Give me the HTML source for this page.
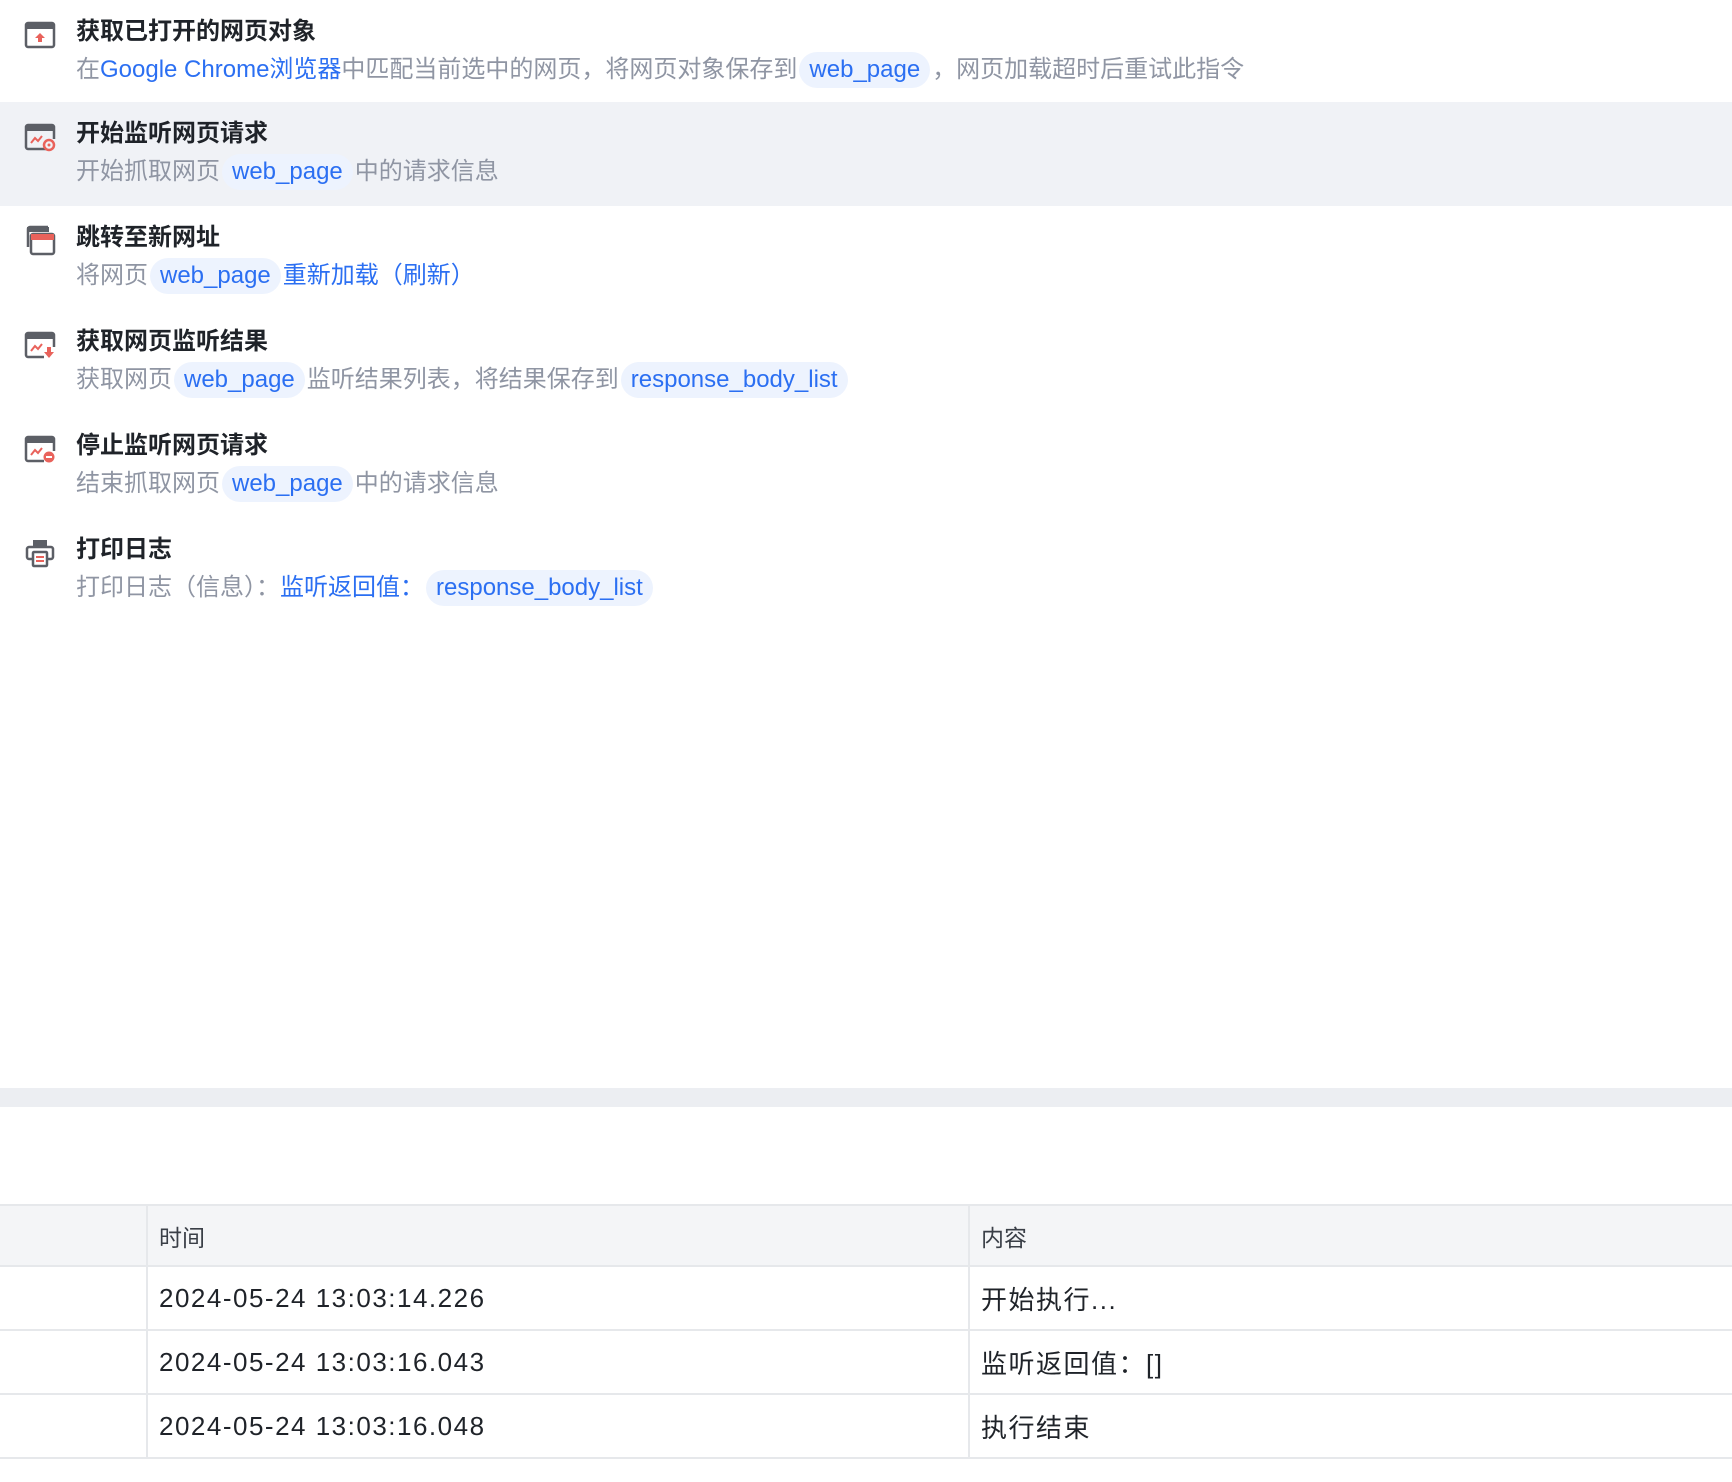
<!DOCTYPE html>
<html><head><meta charset="utf-8"><style>
*{margin:0;padding:0;box-sizing:border-box}
body{width:1732px;height:1482px;background:#fff;font-family:"Liberation Sans","Noto Sans CJK SC",sans-serif;position:relative;overflow:hidden}
.row{position:absolute;left:0;width:1732px;height:104px}
.row.hl{background:#f0f2f6}
.ic{position:absolute;left:24px;top:19px;width:32px;height:32px}
.t{position:absolute;left:76px;top:16px;font-size:24px;font-weight:bold;color:#1f2329;line-height:32px}
.d{position:absolute;left:76px;top:52px;font-size:24px;color:#8f95a3;line-height:36px;white-space:nowrap}
.b{color:#2b6ff2}
.c{display:inline-block;background:#edf3fe;color:#2b6ff2;border-radius:18px;padding:0 10px;line-height:36px;margin:0 2px}
.band{position:absolute;left:0;top:1088px;width:1732px;height:19px;background:#eceef2}
table{position:absolute;left:0;top:1204px;width:1732px;border-collapse:collapse}
td{border-top:2px solid #e6e8eb;border-bottom:2px solid #e6e8eb;border-left:2px solid #e6e8eb;padding-left:11px;color:#1f2329;font-size:26px;height:64px;letter-spacing:1.5px}
tr.h td{background:#f4f5f7;font-size:23px;color:#3a3f47;height:61px;letter-spacing:0}
td:first-child{border-left:none;width:147px}
td:nth-child(2){width:822px}
</style></head><body>
<div class="row" style="top:0">
<svg class="ic" viewBox="0 0 32 32"><rect x="2" y="4" width="28" height="24" rx="2" fill="none" stroke="#5c5f66" stroke-width="2.5"/><rect x="2" y="4" width="28" height="6" fill="#5c5f66"/><path d="M16 14l-5 5h3v4h4v-4h3z" fill="#e9625b"/></svg>
<div class="t">获取已打开的网页对象</div>
<div class="d">在<span class="b">Google Chrome浏览器</span>中匹配当前选中的网页，将网页对象保存到<span class="c">web_page</span>，网页加载超时后重试此指令</div>
</div>
<div class="row hl" style="top:102px">
<svg class="ic" viewBox="0 0 32 32"><path d="M22 28H4a2 2 0 0 1-2-2V6a2 2 0 0 1 2-2h24a2 2 0 0 1 2 2v12" fill="none" stroke="#5c5f66" stroke-width="2.5"/><rect x="2" y="4" width="28" height="6" fill="#5c5f66"/><path d="M7 22l4-5 3 3 4-5" fill="none" stroke="#e9625b" stroke-width="2"/><circle cx="25" cy="24" r="5" fill="none" stroke="#e9625b" stroke-width="2.5"/><circle cx="25" cy="24" r="1.5" fill="#e9625b"/></svg>
<div class="t">开始监听网页请求</div>
<div class="d">开始抓取网页<span class="c">web_page</span>中的请求信息</div>
</div>
<div class="row" style="top:206px">
<svg class="ic" viewBox="0 0 32 32"><path d="M4 22V4a2 2 0 0 1 2-2h18" fill="none" stroke="#5c5f66" stroke-width="2.5"/><rect x="3" y="2" width="22" height="5" fill="#5c5f66"/><rect x="7" y="9" width="23" height="20" rx="2" fill="#fff" stroke="#5c5f66" stroke-width="2.5"/><rect x="7" y="9" width="23" height="6" fill="#e9625b"/></svg>
<div class="t">跳转至新网址</div>
<div class="d">将网页<span class="c">web_page</span><span class="b">重新加载（刷新）</span></div>
</div>
<div class="row" style="top:310px">
<svg class="ic" viewBox="0 0 32 32"><path d="M20 28H4a2 2 0 0 1-2-2V6a2 2 0 0 1 2-2h24a2 2 0 0 1 2 2v12" fill="none" stroke="#5c5f66" stroke-width="2.5"/><rect x="2" y="4" width="28" height="6" fill="#5c5f66"/><path d="M7 22l4-5 3 3 4-5" fill="none" stroke="#e9625b" stroke-width="2"/><path d="M23 18h4v5h3l-5 6-5-6h3z" fill="#e9625b"/></svg>
<div class="t">获取网页监听结果</div>
<div class="d">获取网页<span class="c">web_page</span>监听结果列表，将结果保存到<span class="c">response_body_list</span></div>
</div>
<div class="row" style="top:414px">
<svg class="ic" viewBox="0 0 32 32"><path d="M20 28H4a2 2 0 0 1-2-2V6a2 2 0 0 1 2-2h24a2 2 0 0 1 2 2v12" fill="none" stroke="#5c5f66" stroke-width="2.5"/><rect x="2" y="4" width="28" height="6" fill="#5c5f66"/><path d="M7 22l4-5 3 3 4-5" fill="none" stroke="#e9625b" stroke-width="2"/><circle cx="25" cy="24" r="5.5" fill="#e9625b"/><rect x="22" y="23" width="6" height="2" fill="#fff"/></svg>
<div class="t">停止监听网页请求</div>
<div class="d">结束抓取网页<span class="c">web_page</span>中的请求信息</div>
</div>
<div class="row" style="top:518px">
<svg class="ic" viewBox="0 0 32 32"><rect x="9" y="3" width="14" height="6" fill="#5c5f66"/><path d="M8 22H5a2 2 0 0 1-2-2v-8a2 2 0 0 1 2-2h22a2 2 0 0 1 2 2v8a2 2 0 0 1-2 2h-3" fill="none" stroke="#5c5f66" stroke-width="2.5"/><rect x="9" y="15" width="14" height="14" rx="1" fill="#fff" stroke="#5c5f66" stroke-width="2.5"/><rect x="12" y="19" width="8" height="2" fill="#e9625b"/><rect x="12" y="23" width="8" height="2" fill="#e9625b"/></svg>
<div class="t">打印日志</div>
<div class="d">打印日志（信息）：<span class="b">监听返回值：</span><span class="c">response_body_list</span></div>
</div>
<div class="band"></div>
<table>
<tr class="h"><td></td><td>时间</td><td>内容</td></tr>
<tr><td></td><td>2024-05-24 13:03:14.226</td><td>开始执行...</td></tr>
<tr><td></td><td>2024-05-24 13:03:16.043</td><td>监听返回值：[]</td></tr>
<tr><td></td><td>2024-05-24 13:03:16.048</td><td>执行结束</td></tr>
</table>
</body></html>
